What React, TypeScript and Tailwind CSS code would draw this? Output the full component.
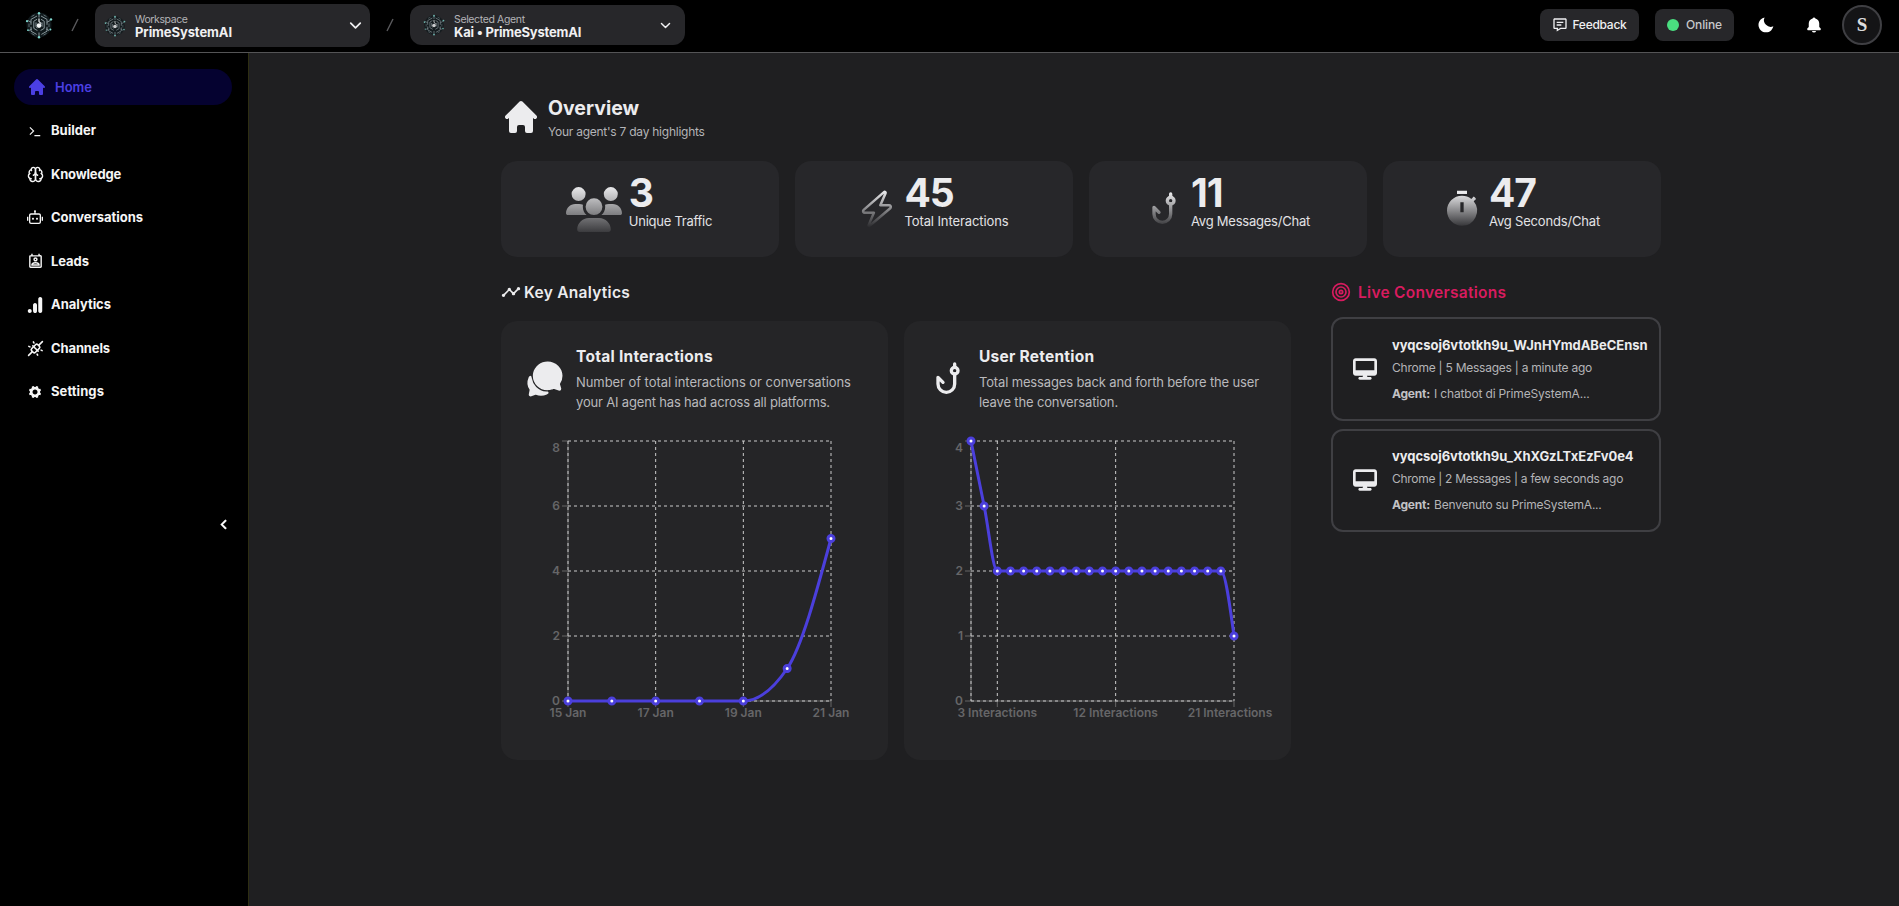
import React from "react";
import type { ReactNode } from "react";
import { HiHome } from "react-icons/hi";
import { FaUsers, FaDesktop } from "react-icons/fa6";
import { FaChevronLeft } from "react-icons/fa";
import { GoZap } from "react-icons/go";
import { TbFishHook } from "react-icons/tb";
import { MdTimer, MdTimeline, MdOutlinePermContactCalendar } from "react-icons/md";
import { IoChatbubbles } from "react-icons/io5";
import { IoIosSettings } from "react-icons/io";
import { BiMessageDetail, BiSolidMoon, BiSolidBell } from "react-icons/bi";
import { LuTarget, LuBrain } from "react-icons/lu";
import { SiGoogleanalytics } from "react-icons/si";
import { PiPlugsConnectedBold } from "react-icons/pi";
import { RiRobot2Line, RiTerminalFill } from "react-icons/ri";

function Logo({ size, dim }: { size: number; dim?: boolean }) {
  return (
    <svg width={size} height={size} viewBox="0 0 28 28" fill="none" className={dim ? "opacity-80" : ""}>
      <circle cx="14" cy="14" r="12.5" fill="#10191c" />
      <g stroke="#87959a" strokeWidth="1">
        <path d="M14 2.5v4M14 21.5v4M2.8 9.5l3.4 1.8M25.2 9.5l-3.4 1.8M4 19.5l3-1.6M24 19.5l-3-1.6" />
        <path d="M12 5L6 8.4v5.4M16 5l6 3.4v5.4M6 15.8v4.4l5.6 3.2M22 15.8v4.4l-5.6 3.2" />
        <path d="M12 8.3l-3.2 1.9v7.2l3.6 2.1M16 8.3l3.2 1.9v7.2l-3.6 2.1M11 11.4v4.4l1.4 1.2M17 11.4v4.4" />
        <path d="M9.5 3.9l-3 1.7M18.5 3.9l3 1.7M4 12.5v3.6M24 12.5v3.6M9.5 24.1l-3-1.7M18.5 24.1l3-1.7" stroke="#5d6c71" />
      </g>
      <path d="M14 7.6v3l2.2 2" stroke="#e6eaeb" strokeWidth="1.2" />
      <circle cx="14" cy="14.6" r="2.3" fill="#f4f6f7" />
      <g fill="#7fd8cf">
        <circle cx="14" cy="2.2" r="1.2" />
        <circle cx="14" cy="26.2" r="1.2" />
        <circle cx="2" cy="10.2" r="1.1" />
        <circle cx="26" cy="8.4" r="1.2" />
        <circle cx="3" cy="19.2" r="0.9" />
        <circle cx="25.4" cy="18.6" r="1" />
      </g>
    </svg>
  );
}

function Chevron({ size }: { size: number }) {
  return (
    <svg width={size} height={size} viewBox="0 0 12 12" fill="none" stroke="#f0f0f2" strokeWidth="1.6" strokeLinecap="round" strokeLinejoin="round">
      <path d="M1.6 3.8L6 8.2l4.4-4.4" />
    </svg>
  );
}

function Header() {
  return (
    <header className="flex h-[53px] shrink-0 border-b border-[#545456] bg-black pr-[17px] pl-[25px]">
      <div className="flex w-[46px] items-center pb-[3px]">
        <Logo size={28} />
      </div>
      <div className="flex w-6 items-center pb-[2px]">
        <svg width="8" height="14" viewBox="0 0 8 14" stroke="#5a5a5d" strokeWidth="1.4"><path d="M1 13L7 1" /></svg>
      </div>
      <div className="mt-1 flex h-[43px] w-[275px] items-center rounded-[10px] bg-[#27272a] pr-2 pl-[9px]">
        <Logo size={22} dim />
        <div className="ml-[9px] flex-1 pt-[2px] whitespace-nowrap">
          <div className="text-[10.5px] leading-[12px] tracking-[-0.4px] text-[#b4b4b7]">Workspace</div>
          <div className="text-[13px] leading-[13px] font-bold tracking-[-0.09px] text-[#f0f0f2]">PrimeSystemAI</div>
        </div>
        <Chevron size={13} />
      </div>
      <div className="flex w-10 items-center justify-center pb-[2px]">
        <svg width="8" height="14" viewBox="0 0 8 14" stroke="#5a5a5d" strokeWidth="1.4"><path d="M1 13L7 1" /></svg>
      </div>
      <div className="mt-[5px] flex h-10 w-[275px] items-center rounded-[12px] bg-[#27272a] pr-[14px] pl-[13px]">
        <Logo size={22} dim />
        <div className="ml-[9px] flex-1 pt-[2px] whitespace-nowrap">
          <div className="text-[10.5px] leading-[12px] tracking-[-0.36px] text-[#b4b4b7]">Selected Agent</div>
          <div className="text-[13px] leading-[13px] font-bold tracking-[-0.2px] text-[#f0f0f2]">Kai • PrimeSystemAI</div>
        </div>
        <Chevron size={11} />
      </div>
      <div className="ml-auto flex h-[50px] items-center">
        <div className="flex h-8 w-[99px] items-center justify-center gap-1 rounded-[8px] bg-[#27272a] text-[12px] font-medium tracking-[-0.26px] text-[#f0f0f2]">
          <BiMessageDetail size={16} />
          Feedback
        </div>
        <div className="ml-4 flex h-8 w-[79px] items-center rounded-[8px] bg-[#27272a] pl-3 text-[12px] font-medium tracking-[-0.12px] text-[#c6c6c9]">
          <i className="mr-[7px] size-3 rounded-full bg-[#4ade80]" />
          Online
        </div>
        <BiSolidMoon size={18} className="ml-[23px] text-white" />
        <BiSolidBell size={18} className="ml-[30px] text-white" />
        <div className="ml-[19px] flex size-10 items-center justify-center rounded-full border-2 border-[#3f3f43] bg-[#141416] font-['Liberation_Serif',serif] text-[19px] font-bold text-[#dcdcde]">
          S
        </div>
      </div>
    </header>
  );
}

const nav: { label: string; icon: ReactNode; cls: string }[] = [
  { label: "Builder", icon: <RiTerminalFill size={14} />, cls: "" },
  { label: "Knowledge", icon: <LuBrain size={17} />, cls: "tracking-[-0.19px]" },
  { label: "Conversations", icon: <RiRobot2Line size={16} />, cls: "tracking-[-0.04px]" },
  { label: "Leads", icon: <MdOutlinePermContactCalendar size={17} />, cls: "tracking-[-0.05px]" },
  { label: "Analytics", icon: <SiGoogleanalytics size={16} />, cls: "tracking-[-0.03px]" },
  { label: "Channels", icon: <PiPlugsConnectedBold size={17} />, cls: "tracking-[-0.12px]" },
  { label: "Settings", icon: <IoIosSettings size={16} />, cls: "tracking-[0.07px]" },
];

function Sidebar() {
  return (
    <aside className="flex w-[249px] shrink-0 flex-col border-r border-[#2e2e12] bg-black">
      <div className="mt-4 ml-[14px] flex h-9 w-[218px] items-center rounded-[18px] bg-[#050230] pl-[13px] text-[13px] font-semibold text-[#4b3fe3]">
        <HiHome size={20} className="mr-2" />
        <span className="pt-px">Home</span>
      </div>
      <nav className="mt-[4px] text-[13px] font-bold text-[#f5f5f5]">
        {nav.map((n) => (
          <div key={n.label} className="flex h-[43.5px] items-center pl-[25px]">
            <span className="flex w-5 justify-center">{n.icon}</span>
            <span className={"ml-[6px] " + n.cls}>{n.label}</span>
          </div>
        ))}
      </nav>
      <div className="mt-[105px] flex justify-end pr-[19px] text-white">
        <FaChevronLeft size={11} stroke="currentColor" strokeWidth={20} />
      </div>
    </aside>
  );
}

function Stat({ icon, value, label, cls }: { icon: ReactNode; value: string; label: string; cls: string }) {
  return (
    <div className="flex h-24 items-center justify-center rounded-[16px] bg-[#27272a]">
      {icon}
      <div className="mr-[2px] ml-[7px] pb-4 whitespace-nowrap">
        <div className="text-[39px] leading-[40px] font-bold tracking-[-1.1px] text-[#ececee]">{value}</div>
        <div className={"text-[13px] leading-4 text-[#e2e2e5] " + cls}>{label}</div>
      </div>
    </div>
  );
}

type Pt = [number, number];

// Monotone cubic interpolation through the points.
function monotone(p: Pt[]) {
  const n = p.length;
  const m: number[] = new Array(n).fill(0);
  const slope = (i: number) => (p[i + 1][1] - p[i][1]) / (p[i + 1][0] - p[i][0]);
  for (let i = 1; i < n - 1; i++) {
    const a = slope(i - 1);
    const b = slope(i);
    m[i] = (Math.sign(a) + Math.sign(b)) * Math.min(Math.abs(a), Math.abs(b), 0.25 * Math.abs(a + b)) || 0;
  }
  m[0] = (3 * slope(0) - m[1]) / 2;
  m[n - 1] = (3 * slope(n - 2) - m[n - 2]) / 2;
  let d = `M${p[0][0]},${p[0][1]}`;
  for (let i = 0; i < n - 1; i++) {
    const h = (p[i + 1][0] - p[i][0]) / 3;
    d += `C${p[i][0] + h},${p[i][1] + h * m[i]},${p[i + 1][0] - h},${p[i + 1][1] - h * m[i + 1]},${p[i + 1][0]},${p[i + 1][1]}`;
  }
  return d;
}

function Chart({ data, yTicks, xTicks }: { data: number[]; yTicks: number[]; xTicks: [number, string][] }) {
  const X = 67;
  const Y = 28;
  const W = 263;
  const H = 260;
  const max = yTicks[yTicks.length - 1];
  const px = (i: number) => X + (W * i) / (data.length - 1);
  const py = (v: number) => Y + H - (H * v) / max;
  const pts: Pt[] = data.map((v, i) => [px(i), py(v)]);
  const verticals = xTicks.map(([i]) => px(i));
  if (xTicks[0][0] !== 0) verticals.unshift(X);
  const labelX = (i: number, label: string) => (label.length > 8 && px(i) > 320 ? px(i) - 4 : px(i));
  return (
    <svg width="387" height="346" viewBox="0 0 387 346" fill="none" className="block">
      <g stroke="#666">
        <path d={`M${X} ${Y}v${H}h${W}`} />
        {yTicks.map((v) => <path key={v} d={`M${X - 6} ${py(v)}h6`} />)}
        {xTicks.map(([i]) => <path key={i} d={`M${px(i)} ${Y + H}v6`} />)}
      </g>
      <g stroke="#ccc" strokeDasharray="3 3">
        {yTicks.map((v) => <path key={v} d={`M${X} ${py(v)}h${W}`} />)}
        {verticals.map((x) => <path key={x} d={`M${x} ${Y}v${H}`} />)}
      </g>
      <g fill="#666668" fontSize="12" fontWeight="600">
        {yTicks.map((v) => (
          <text key={v} x={X - 8} y={(v === max ? Y + 7 : py(v)) + 4.3} textAnchor="end">{v}</text>
        ))}
        {xTicks.map(([i, label]) => (
          <text key={i} x={labelX(i, label)} y={Y + H + 16.4} textAnchor="middle">{label}</text>
        ))}
      </g>
      <path d={monotone(pts)} stroke="#4b3fdc" strokeWidth="3" />
      {pts.map(([x, y], i) => <circle key={i} cx={x} cy={y} r="3" fill="#fff" stroke="#4b3fdc" strokeWidth="3" />)}
    </svg>
  );
}

function ChartCard({ icon, title, titleCls, children, chart }: { icon: ReactNode; title: string; titleCls: string; children: ReactNode; chart: ReactNode }) {
  return (
    <div className="h-[439px] w-[387px] rounded-[16px] bg-[#252527] pt-6">
      <div className="flex h-[68px] items-center pl-6 text-[#ececee]">
        {icon}
        <div className="ml-[11px] whitespace-nowrap">
          <div className={"text-[15.5px] leading-6 font-bold " + titleCls}>{title}</div>
          <div className="mt-[3px] mb-px text-[13px] leading-5 text-[#b9b9bc]">{children}</div>
        </div>
      </div>
      {chart}
    </div>
  );
}

function Live({ h, id, idCls, meta, metaCls, msg, msgCls }: { h: string; id: string; idCls: string; meta: string; metaCls: string; msg: string; msgCls: string }) {
  return (
    <div className={"flex items-center rounded-[12px] border-2 border-[#3f3f43] pl-5 whitespace-nowrap " + h}>
      <FaDesktop size={24} className="text-[#ececee]" />
      <div className="ml-[15px] text-[12px] text-[#b4b4b7]">
        <div className={"text-[13px] leading-6 font-bold text-[#ececee] " + idCls}>{id}</div>
        <div className={"leading-[22px] " + metaCls}>{meta}</div>
        <div className="mt-1 leading-[22px]">
          <b className="mr-1 tracking-[-0.2px] text-[#c2c2c5]">Agent:</b>
          <span className={msgCls}>{msg}</span>
        </div>
      </div>
    </div>
  );
}

export default function App() {
  return (
    <div className="flex h-[906px] w-[1899px] flex-col overflow-hidden bg-[#1f1f21] font-['Inter','Liberation_Sans',sans-serif]">
      <svg width="0" height="0" className="absolute">
        <defs>
          <linearGradient id="g512" gradientUnits="userSpaceOnUse" x1="0" y1="0" x2="0" y2="512"><stop stopColor="#e8e8ea" /><stop offset="1" stopColor="#3c3c3f" /></linearGradient>
          <linearGradient id="g24" gradientUnits="userSpaceOnUse" x1="0" y1="2" x2="0" y2="22"><stop stopColor="#ececee" /><stop offset="1" stopColor="#38383b" /></linearGradient>
          <linearGradient id="gZap" gradientUnits="userSpaceOnUse" x1="0" y1="1" x2="0" y2="23"><stop stopColor="#ececee" /><stop offset="1" stopColor="#29292c" /></linearGradient>
        </defs>
      </svg>
      <Header />
      <div className="flex min-h-0 flex-1">
        <Sidebar />
        <main className="ml-[252px] w-[1160px]">
          <div className="flex h-[108px] items-start pt-[43px]">
            <HiHome size={40} className="mt-px text-[#ececee]" />
            <div className="ml-[7px] whitespace-nowrap">
              <h1 className="text-[19.5px] leading-6 font-bold text-[#ececee]">Overview</h1>
              <p className="mt-px text-[12px] leading-[22px] tracking-[-0.25px] text-[#b4b4b7]">Your agent's 7 day highlights</p>
            </div>
          </div>
          <div className="grid grid-cols-4 gap-4">
            <Stat icon={<FaUsers size={56} className="h-[45px]" fill="url(#g512)" />} value="3" label="Unique Traffic" cls="tracking-[-0.26px]" />
            <Stat icon={<GoZap size={40} fill="url(#gZap)" />} value="45" label="Total Interactions" cls="tracking-[-0.1px]" />
            <Stat icon={<TbFishHook size={40} stroke="url(#g24)" />} value="11" label="Avg Messages/Chat" cls="tracking-[-0.23px]" />
            <Stat icon={<MdTimer size={40} fill="url(#g24)" />} value="47" label="Avg Seconds/Chat" cls="tracking-[-0.18px]" />
          </div>
          <div className="mt-6 flex gap-10">
            <section className="w-[790px]">
              <h2 className="flex h-[22px] items-center gap-[3px] text-[15.5px] font-semibold tracking-[0.27px] text-[#ececee]">
                <MdTimeline size={20} />
                <span className="pt-[2px]">Key Analytics</span>
              </h2>
              <div className="mt-[18px] flex gap-4">
                <ChartCard
                  icon={<IoChatbubbles size={40} />}
                  title="Total Interactions"
                  titleCls="tracking-[0.28px]"
                  chart={<Chart data={[0, 0, 0, 0, 0, 1, 5]} yTicks={[0, 2, 4, 6, 8]} xTicks={[[0, "15 Jan"], [2, "17 Jan"], [4, "19 Jan"], [6, "21 Jan"]]} />}
                >
                  <div className="tracking-[-0.06px]">Number of total interactions or conversations</div>
                  <div className="tracking-[-0.17px]">your AI agent has had across all platforms.</div>
                </ChartCard>
                <ChartCard
                  icon={<TbFishHook size={40} />}
                  title="User Retention"
                  titleCls="tracking-[0.24px]"
                  chart={
                    <Chart
                      data={[4, 3, 2, 2, 2, 2, 2, 2, 2, 2, 2, 2, 2, 2, 2, 2, 2, 2, 2, 2, 1]}
                      yTicks={[0, 1, 2, 3, 4]}
                      xTicks={[[2, "3 Interactions"], [11, "12 Interactions"], [20, "21 Interactions"]]}
                    />
                  }
                >
                  <div className="tracking-[-0.15px]">Total messages back and forth before the user</div>
                  <div className="tracking-[-0.15px]">leave the conversation.</div>
                </ChartCard>
              </div>
            </section>
            <section className="w-[330px]">
              <h2 className="flex h-[22px] items-center gap-[7px] text-[15.5px] font-semibold tracking-[0.28px] text-[#d81b5f]">
                <LuTarget size={20} />
                <span className="pt-[2px]">Live Conversations</span>
              </h2>
              <div className="mt-[14px] flex flex-col gap-2">
                <Live
                  h="h-[104px]"
                  id="vyqcsoj6vtotkh9u_WJnHYmdABeCEnsn"
                  idCls="tracking-[-0.01px]"
                  meta="Chrome | 5 Messages | a minute ago"
                  metaCls="tracking-[-0.24px]"
                  msg="I chatbot di PrimeSystemA..."
                  msgCls="tracking-[-0.17px]"
                />
                <Live
                  h="h-[103px] pb-[2px]"
                  id="vyqcsoj6vtotkh9u_XhXGzLTxEzFv0e4"
                  idCls="tracking-[-0.05px]"
                  meta="Chrome | 2 Messages | a few seconds ago"
                  metaCls="tracking-[-0.28px]"
                  msg="Benvenuto su PrimeSystemA..."
                  msgCls="tracking-[-0.24px]"
                />
              </div>
            </section>
          </div>
        </main>
      </div>
    </div>
  );
}
